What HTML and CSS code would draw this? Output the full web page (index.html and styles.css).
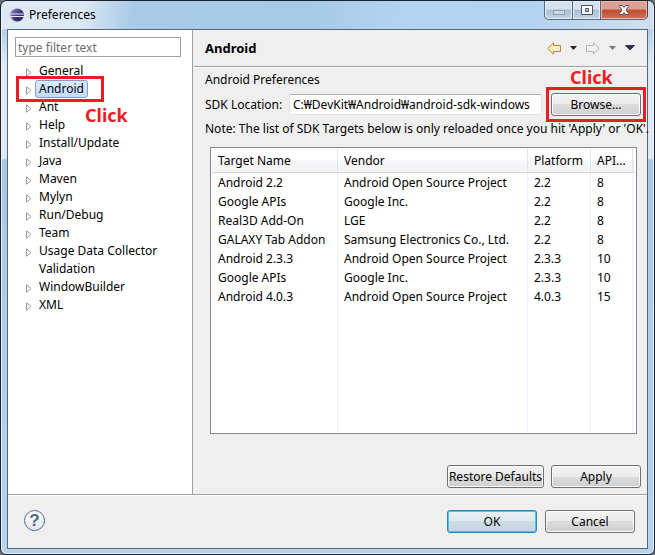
FILE: index.html
```html
<!DOCTYPE html>
<html lang="en">
<head>
<meta charset="utf-8">
<title>Preferences</title>
<link rel="stylesheet" href="styles.css">
</head>
<body>
<div class="window">
  <header class="titlebar">
    <svg class="logo" viewBox="0 0 16 16" aria-hidden="true">
      <defs><linearGradient id="orb" x1="0" y1="0" x2="1" y2="1"><stop offset="0" stop-color="#8c8cc0"/><stop offset=".5" stop-color="#3c3a80"/><stop offset="1" stop-color="#1c1a50"/></linearGradient></defs>
      <circle cx="7" cy="8" r="6.500" fill="#c3a9c9"/>
      <circle cx="8.500" cy="8" r="6.500" fill="url(#orb)"/>
      <path d="M1.500 7h14M1.500 9.500h14" stroke="#e8e8f6" stroke-width="1"/>
    </svg>
    <h1 class="title">Preferences</h1>
    <div class="controls">
      <button class="control" type="button" aria-label="Minimize" disabled>
        <svg viewBox="0 0 14 12"><rect x="1.500" y="6.500" width="11" height="4" fill="#cfd9e4" stroke="#929fb0"/></svg>
      </button>
      <button class="control" type="button" aria-label="Maximize">
        <svg viewBox="0 0 14 12"><path d="M1.500 1.500h11v9h-11zM5.500 4.500v3h3v-3z" fill="#fff" fill-rule="evenodd" stroke="#4c5360"/></svg>
      </button>
      <button class="control close" type="button" aria-label="Close">
        <svg viewBox="0 0 14 12"><path d="M2.500 1.500h3L7 3.500l1.500-2h3v1L9 6l2.500 3.500v1h-3L7 8.500l-1.500 2h-3v-1L5 6 2.500 2.500z" fill="#fff" stroke="#55505c"/></svg>
      </button>
    </div>
  </header>

  <div class="client">
    <div class="panes">
      <nav class="sidebar">
        <input class="filter" type="text" placeholder="type filter text" aria-label="type filter text">
        <ul class="tree">
          <li><svg class="twist" viewBox="0 0 6 9"><path d="M.5.8v7.400L5 4.500z"/></svg><a href="#">General</a></li>
          <li class="current"><svg class="twist" viewBox="0 0 6 9"><path d="M.5.8v7.400L5 4.500z"/></svg><a href="#">Android</a><span class="mark mark-tree">Click</span></li>
          <li><svg class="twist" viewBox="0 0 6 9"><path d="M.5.8v7.400L5 4.500z"/></svg><a href="#">Ant</a></li>
          <li><svg class="twist" viewBox="0 0 6 9"><path d="M.5.8v7.400L5 4.500z"/></svg><a href="#">Help</a></li>
          <li><svg class="twist" viewBox="0 0 6 9"><path d="M.5.8v7.400L5 4.500z"/></svg><a href="#">Install/Update</a></li>
          <li><svg class="twist" viewBox="0 0 6 9"><path d="M.5.8v7.400L5 4.500z"/></svg><a href="#">Java</a></li>
          <li><svg class="twist" viewBox="0 0 6 9"><path d="M.5.8v7.400L5 4.500z"/></svg><a href="#">Maven</a></li>
          <li><svg class="twist" viewBox="0 0 6 9"><path d="M.5.8v7.400L5 4.500z"/></svg><a href="#">Mylyn</a></li>
          <li><svg class="twist" viewBox="0 0 6 9"><path d="M.5.8v7.400L5 4.500z"/></svg><a href="#">Run/Debug</a></li>
          <li><svg class="twist" viewBox="0 0 6 9"><path d="M.5.8v7.400L5 4.500z"/></svg><a href="#">Team</a></li>
          <li><svg class="twist" viewBox="0 0 6 9"><path d="M.5.8v7.400L5 4.500z"/></svg><a href="#">Usage Data Collector</a></li>
          <li><svg class="twist" viewBox="0 0 6 9"></svg><a href="#">Validation</a></li>
          <li><svg class="twist" viewBox="0 0 6 9"><path d="M.5.8v7.400L5 4.500z"/></svg><a href="#">WindowBuilder</a></li>
          <li><svg class="twist" viewBox="0 0 6 9"><path d="M.5.8v7.400L5 4.500z"/></svg><a href="#">XML</a></li>
        </ul>
      </nav>

      <main class="page">
        <div class="page-head">
          <h2>Android</h2>
          <div class="history">
            <button type="button" aria-label="Back"><svg width="14" height="13" viewBox="0 0 14 13"><path d="M.8 6.500L6.500.9v2.600h7v6h-7v2.600z" fill="#fdf0b4" stroke="#b98a2c"/></svg></button>
            <button type="button" aria-label="Back history"><svg width="7" height="4" viewBox="0 0 7 4"><path d="M0 0h7L3.500 4z" fill="#222"/></svg></button>
            <button type="button" aria-label="Forward"><svg width="14" height="13" viewBox="0 0 14 13"><path d="M13.200 6.500L7.500.9v2.600h-7v6h7v2.600z" fill="#f1f1ef" stroke="#b4b4b0"/></svg></button>
            <button type="button" aria-label="Forward history"><svg width="7" height="4" viewBox="0 0 7 4"><path d="M0 0h7L3.500 4z" fill="#777"/></svg></button>
            <button type="button" aria-label="Menu"><svg width="10" height="6" viewBox="0 0 10 6"><path d="M.5.500h9L5 5z" fill="#2f2f66" stroke="#33334d"/></svg></button>
          </div>
        </div>

        <div class="page-body">
          <p class="line">Android Preferences</p>
          <div class="location">
            <label for="sdk">SDK Location:</label>
            <input id="sdk" type="text" value="C:₩DevKit₩Android₩android-sdk-windows">
            <div class="browse">
              <button class="btn" type="button">Browse...</button>
              <span class="mark mark-browse">Click</span>
            </div>
          </div>
          <p class="line note">Note: The list of SDK Targets below is only reloaded once you hit 'Apply' or 'OK'.</p>

          <div class="targets">
            <table>
              <colgroup><col class="c-name"><col class="c-vendor"><col class="c-platform"><col class="c-api"><col></colgroup>
              <thead><tr><th>Target Name</th><th>Vendor</th><th>Platform</th><th>API...</th><td></td></tr></thead>
              <tbody>
                <tr><td>Android 2.2</td><td>Android Open Source Project</td><td>2.2</td><td>8</td><td></td></tr>
                <tr><td>Google APIs</td><td>Google Inc.</td><td>2.2</td><td>8</td><td></td></tr>
                <tr><td>Real3D Add-On</td><td>LGE</td><td>2.2</td><td>8</td><td></td></tr>
                <tr><td>GALAXY Tab Addon</td><td>Samsung Electronics Co., Ltd.</td><td>2.2</td><td>8</td><td></td></tr>
                <tr><td>Android 2.3.3</td><td>Android Open Source Project</td><td>2.3.3</td><td>10</td><td></td></tr>
                <tr><td>Google APIs</td><td>Google Inc.</td><td>2.3.3</td><td>10</td><td></td></tr>
                <tr><td>Android 4.0.3</td><td>Android Open Source Project</td><td>4.0.3</td><td>15</td><td></td></tr>
                <tr class="rest"><td></td><td></td><td></td><td></td><td></td></tr>
              </tbody>
            </table>
          </div>

          <div class="actions">
            <button class="btn wide" type="button">Restore Defaults</button>
            <button class="btn" type="button">Apply</button>
          </div>
        </div>
      </main>
    </div>

    <footer class="footer">
      <button class="help" type="button" aria-label="Help">?</button>
      <button class="btn default" type="button">OK</button>
      <button class="btn" type="button">Cancel</button>
    </footer>
  </div>
</div>
</body>
</html>
```

FILE: styles.css
```css
* { box-sizing: border-box; }

body {
  margin: 0;
  background: #6b6f74;
  color: #000;
  font: 12px/18px "Noto Sans", "Noto Sans CJK KR", sans-serif;
}

h1, h2, p, ul { margin: 0; padding: 0; }
button, input { font: inherit; color: inherit; }

.window {
  display: flex;
  flex-direction: column;
  min-height: 100vh;
  padding: 0 6px 5px;
  border: 1px solid #1b222b;
  border-radius: 7px 7px 6px 6px;
  background: linear-gradient(#c4d8ec 0, #b6d0ea 30px, #dde8f3 60px, #dfe9f4 157px, #a9c8e8 159px, #b4d3f1 100%);
  box-shadow: inset 0 0 0 1px #e9f3fb;
}

.titlebar {
  display: flex;
  align-items: center;
  height: 28px;
  margin: 0 -5px;
  padding: 0 5px 0 7px;
  border-radius: 6px 6px 0 0;
  background: linear-gradient(100deg, #dfe9f4 0, #dce9f5 80px, #a9cbe9 130px, #a6c9e8 300px, #b4d3f0 400px, #b2d2f0 520px, #cfdfef 100%);
}
.logo { width: 16px; height: 16px; }
.title { margin-left: 4px; font-size: 12px; font-weight: 400; }

.controls { display: flex; align-self: flex-start; margin-left: auto; }
.control {
  display: flex;
  align-items: center;
  justify-content: center;
  width: 28px;
  height: 19px;
  padding: 0;
  border: 1px solid #59697c;
  border-top: 0;
  border-right: 0;
  background: linear-gradient(#d5e1ee 0 45%, #a9bfd5 50%, #c3d6e8);
  box-shadow: inset 0 0 0 1px #e3edf6;
}
.control:first-child { border-radius: 0 0 0 5px; }
.control svg { width: 14px; height: 12px; }
.close {
  width: 48px;
  border-right: 1px solid #59343a;
  border-radius: 0 0 5px 0;
  background: linear-gradient(#dda193 0 45%, #c04a32 50%, #d2725a);
  box-shadow: inset 0 0 0 1px #eab9ac;
}

.client {
  display: flex;
  flex: 1;
  flex-direction: column;
  border: 1px solid #56677a;
  background: #efefef;
}
.panes { display: flex; flex: 1; border-bottom: 1px solid #a0a0a0; }

.sidebar {
  flex: none;
  width: 185px;
  padding: 7px 11px 0 7px;
  border-right: 1px solid #a0a0a0;
  background: #fff;
}
.filter {
  display: block;
  width: 100%;
  height: 20px;
  padding: 0 2px;
  border: 1px solid #a0a0a0;
  border-radius: 0;
  background: #fff;
}
.filter::placeholder { color: #6d6d6d; opacity: 1; }

.tree { margin-top: 5px; list-style: none; }
.tree li { display: flex; align-items: center; position: relative; height: 18px; padding-left: 11px; }
.twist { width: 6px; height: 9px; margin: 3px 3px 0 0; fill: #fff; stroke: #9a9a9a; }
.tree a { padding: 0 3px; border: 1px solid transparent; border-radius: 3px; color: inherit; line-height: 16px; text-decoration: none; }
.tree .current a { border-color: #7da2ce; background: linear-gradient(#dcebfc, #c1dbfc); }
.current::after {
  content: "";
  position: absolute;
  inset: -4px 77px -4px 1px;
  border: 3px solid #ed1c24;
}

.mark {
  position: absolute;
  color: #ed1c24;
  font-size: 18px;
  font-weight: 700;
  line-height: 24px;
}
.mark-tree { top: 23px; left: 70px; }
.mark-browse { top: -28px; left: 19px; }

.page { display: flex; flex: 1; flex-direction: column; min-width: 0; margin-left: 1px; }
.page-head {
  display: flex;
  align-items: center;
  height: 37px;
  padding: 0 12px 0 11px;
  border-bottom: 1px solid #a0a0a0;
  box-shadow: 0 1px #fff;
}
.page-head h2 { font-size: 13px; font-weight: 700; }
.history { display: flex; align-items: center; gap: 9px; margin-left: auto; }
.history button { display: flex; padding: 0; border: 0; background: none; }

.page-body { display: flex; flex: 1; flex-direction: column; padding: 4px 6px 6px 11px; }
.line { line-height: 18px; white-space: nowrap; }
.location { display: flex; align-items: center; margin-top: 4px; }
.location label { flex: none; width: 84px; white-space: nowrap; }
.location input {
  flex: 1;
  min-width: 0;
  height: 21px;
  padding: 0 3px;
  border: 1px solid #e2e3ea;
  border-top-color: #abadb3;
  border-radius: 2px;
  background: #fff;
}
.browse { position: relative; margin-left: 9px; }
.browse .btn { display: block; }
.browse::after {
  content: "";
  position: absolute;
  inset: -6px -5px;
  border: 3px solid #ed1c24;
  pointer-events: none;
}
.note { margin-top: 4px; }

.btn {
  width: 90px;
  height: 23px;
  padding: 0;
  border: 1px solid #707070;
  border-radius: 3px;
  background: linear-gradient(#f2f2f2 0, #ebebeb 50%, #dddddd 50%, #cfcfcf 100%);
  box-shadow: inset 0 0 0 1px #fcfcfc;
  line-height: 20px;
  white-space: nowrap;
}
.wide { width: 97px; }
.default {
  border-color: #3c7fb1;
  background: linear-gradient(#eaf1f4 0, #dfe9ee 50%, #cedde5 50%, #c3d6e0 100%);
  box-shadow: inset 0 0 0 1px #41c8f0;
}

.targets {
  display: flex;
  flex: 1;
  margin: 9px 4px 0 5px;
  padding: 1px;
  border: 1px solid #828790;
  background: #fff;
}
table { width: 100%; border-collapse: separate; border-spacing: 0; table-layout: fixed; }
.c-name { width: 126px; }
.c-vendor { width: 190px; }
.c-platform { width: 63px; }
.c-api { width: 42px; }
thead tr { height: 24px; background: linear-gradient(#fff 0 45%, #f5f6f8 50%, #f1f3f5); }
th, td { padding: 0 0 0 6px; overflow: hidden; white-space: nowrap; text-align: left; font-weight: 400; }
thead th, thead td { border-bottom: 1px solid #d5d5d5; }
th { border-right: 1px solid #e0e3e8; }
tbody td { height: 19px; border-right: 1px solid #ecf2fb; }
td:last-child { padding: 0; border-right: 0; }
tbody .rest td { height: auto; }

.actions { display: flex; justify-content: flex-end; gap: 7px; margin-top: 31px; }

.footer { display: flex; align-items: flex-start; gap: 8px; padding: 14px 12px 15px 16px; border-top: 1px solid #fff; }
.help {
  width: 21px;
  height: 21px;
  margin-right: auto;
  padding: 0;
  border: 1px solid #506a91;
  border-radius: 50%;
  background: linear-gradient(#fff, #e3e6ec);
  color: #4c658b;
  font: 700 17px/18px "Liberation Sans", sans-serif;
}
```
